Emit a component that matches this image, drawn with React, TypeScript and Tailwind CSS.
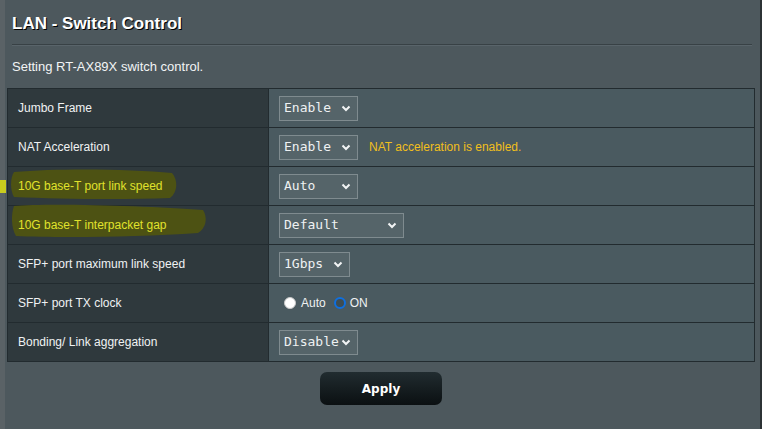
import React from "react";

type Row = {
  label: string;
  value?: string;
  width?: string;
  note?: string;
  radio?: boolean;
  marked?: boolean;
};

const rows: Row[] = [
  { label: "Jumbo Frame", value: "Enable", width: "w-[79px]" },
  { label: "NAT Acceleration", value: "Enable", width: "w-[79px]", note: "NAT acceleration is enabled." },
  { label: "10G base-T port link speed", value: "Auto", width: "w-[79px]", marked: true },
  { label: "10G base-T interpacket gap", value: "Default", width: "w-[125px]", marked: true },
  { label: "SFP+ port maximum link speed", value: "1Gbps", width: "w-[71px]" },
  { label: "SFP+ port TX clock", radio: true },
  { label: "Bonding/ Link aggregation", value: "Disable", width: "w-[79px]" },
];

const Chevron = () => (
  <svg width="10" height="7" viewBox="0 0 10 7" className="shrink-0">
    <polyline points="1.5,1.5 5,5 8.5,1.5" fill="none" stroke="#f2f4f5" strokeWidth="2" />
  </svg>
);

const Select = ({ value, width }: { value: string; width: string }) => (
  <div
    className={`${width} h-[25px] flex items-center justify-between pl-[4px] pr-[6px] border border-[#7f8b8f] bg-[#556469] text-[#eef1f2] text-[13px] font-['DejaVu_Sans_Mono',monospace]`}
  >
    <span>{value}</span>
    <Chevron />
  </div>
);

export default function App() {
  return (
    <div className="relative flex w-[762px] h-[429px] overflow-hidden bg-[#5a6266] font-['Liberation_Sans',Arial,sans-serif]">
      {/* highlighter marks */}
      <svg className="absolute inset-0 z-10 pointer-events-none" width="762" height="429">
        <path
          d="M14 172 C60 168 130 169 172 173 C178 180 178 192 170 198 C120 200 60 199 14 197 C10 190 10 178 14 172 Z"
          fill="#4f5311"
          opacity="0.95"
        />
        <rect x="0" y="180" width="6" height="13" fill="#c9cc1e" />
        <path
          d="M14 206 C50 203 150 206 203 210 C208 218 206 228 198 233 C140 237 60 238 16 236 C11 228 11 214 14 206 Z"
          fill="#4f5311"
          opacity="0.95"
        />
      </svg>

      <div className="w-[5px] shrink-0" />

      <div className="w-[755px] shrink-0 bg-[#4d585d] flex flex-col">
        <div className="h-[44px] pl-[7px] pt-[14px]">
          <h1 className="text-white text-[17px] font-bold leading-[20px] [text-shadow:1px_1px_0_#000]">
            LAN - Switch Control
          </h1>
        </div>
        <div className="ml-[7px] w-[740px]">
          <div className="h-px bg-[#384145]" />
          <div className="h-px bg-[#59646a]" />
        </div>
        <div className="h-[42px] pl-[7px] flex items-center text-[13px] text-[#f2f4f5]">
          Setting RT-AX89X switch control.
        </div>

        <div className="ml-[2px] w-[748px] border border-[#222b2f] divide-y divide-[#222b2f]">
          {rows.map((r) => (
            <div key={r.label} className="flex box-content h-[38px]">
              <div className="w-[261px] shrink-0 bg-[#2f393d] border-r border-[#222b2f] flex items-center pl-[10px]">
                <span
                  className={`relative z-20 text-[12px] ${r.marked ? "text-[#e0e22c]" : "text-[#f0f2f3]"}`}
                >
                  {r.label}
                </span>
              </div>
              <div className="flex-1 bg-[#4a5a60] flex items-center pl-[10px] gap-[11px]">
                {r.radio ? (
                  <div className="flex items-center text-[12px] text-[#f0f2f3] pl-[5px]">
                    <span className="w-[12px] h-[12px] rounded-full bg-white border border-[#c8c8c8]" />
                    <span className="ml-[5px]">Auto</span>
                    <span className="ml-[8px] w-[12px] h-[12px] rounded-full border-[2px] border-[#0f6fde] bg-[#3f4d52]" />
                    <span className="ml-[4px]">ON</span>
                  </div>
                ) : (
                  <Select value={r.value!} width={r.width!} />
                )}
                {r.note && <span className="text-[12px] text-[#f1bf1c]">{r.note}</span>}
              </div>
            </div>
          ))}
        </div>

        <div className="ml-[2px] w-[748px] flex justify-center mt-[10px]">
          <button className="w-[122px] h-[33px] rounded-[7px] bg-gradient-to-b from-[#212c30] to-[#0b1012] text-white text-[12px] font-bold font-['DejaVu_Sans',Verdana,sans-serif]">
            Apply
          </button>
        </div>
      </div>

      <div className="flex-1 bg-[#2c3235]" />
    </div>
  );
}
